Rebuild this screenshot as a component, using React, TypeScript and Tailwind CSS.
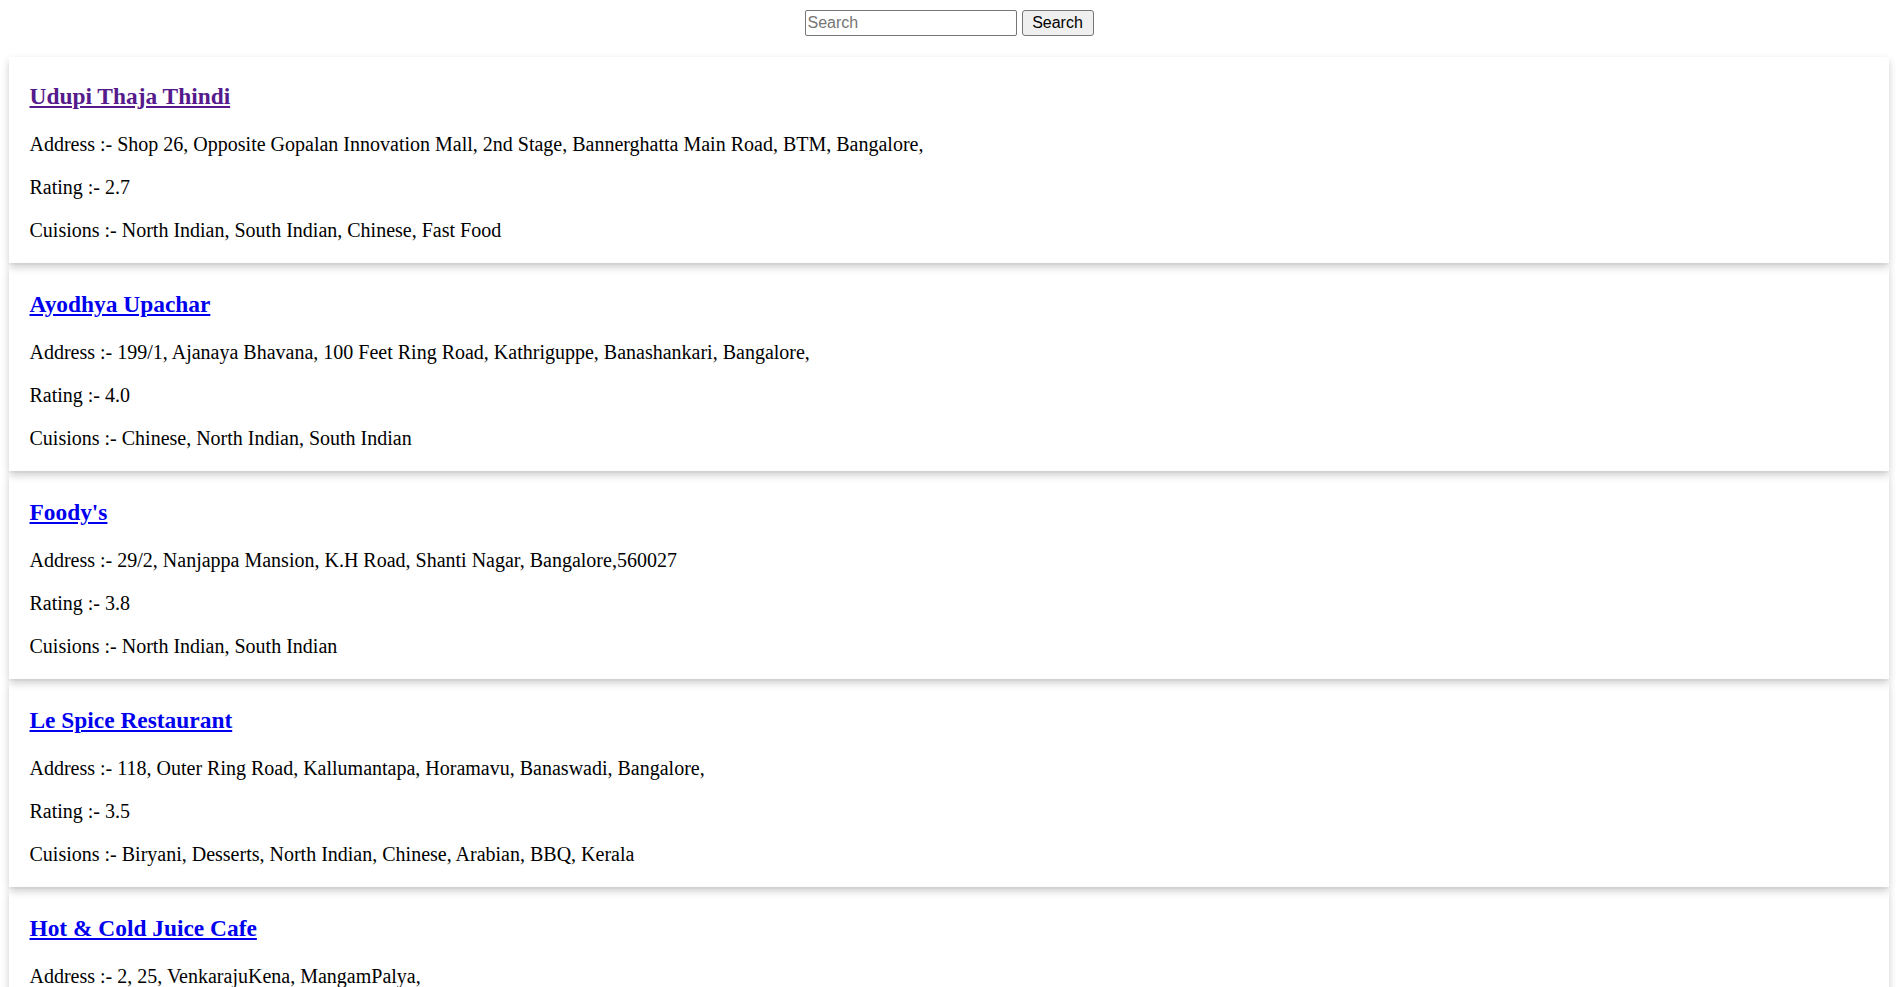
import React, { useState } from 'react'

interface Restaurant {
  name: string
  address: string
  rating: string
  cuisines: string
  visited?: boolean
}

const restaurants: Restaurant[] = [
  {
    name: 'Udupi Thaja Thindi',
    address: 'Shop 26, Opposite Gopalan Innovation Mall, 2nd Stage, Bannerghatta Main Road, BTM, Bangalore,',
    rating: '2.7',
    cuisines: 'North Indian, South Indian, Chinese, Fast Food',
    visited: true,
  },
  {
    name: 'Ayodhya Upachar',
    address: '199/1, Ajanaya Bhavana, 100 Feet Ring Road, Kathriguppe, Banashankari, Bangalore,',
    rating: '4.0',
    cuisines: 'Chinese, North Indian, South Indian',
  },
  {
    name: "Foody's",
    address: '29/2, Nanjappa Mansion, K.H Road, Shanti Nagar, Bangalore,560027',
    rating: '3.8',
    cuisines: 'North Indian, South Indian',
  },
  {
    name: 'Le Spice Restaurant',
    address: '118, Outer Ring Road, Kallumantapa, Horamavu, Banaswadi, Bangalore,',
    rating: '3.5',
    cuisines: 'Biryani, Desserts, North Indian, Chinese, Arabian, BBQ, Kerala',
  },
  {
    name: 'Hot & Cold Juice Cafe',
    address: '2, 25, VenkarajuKena, MangamPalya,',
    rating: '3.2',
    cuisines: 'Juices, Fast Food',
  },
]

const RestaurantCard: React.FC<{ item: Restaurant }> = ({ item }) => (
  <div className="mx-auto w-[99%] px-5 pt-[25.6px] pb-[21.2px] shadow-[0_4px_8px_0_rgba(0,0,0,0.2)]">
    <a
      href="#"
      className={
        item.visited
          ? 'block w-fit text-[23.4px] font-bold leading-[26.9px] text-[#551a8b] underline'
          : 'block w-fit text-[23.4px] font-bold leading-[26.9px] text-[#0000ee] underline'
      }
    >
      {item.name}
    </a>
    <div className="mt-[23.3px] flex flex-col gap-5 text-[20px] leading-[23px] text-black">
      <p>Address :- {item.address}</p>
      <p>Rating :- {item.rating}</p>
      <p>Cuisions :- {item.cuisines}</p>
    </div>
  </div>
)

export default function App() {
  const [query, setQuery] = useState('')

  return (
    <div className="min-h-screen bg-white font-['Liberation_Serif',serif]">
      <div className="flex justify-center gap-[5px] pt-[10px]">
        <input
          type="text"
          value={query}
          onChange={(e) => setQuery(e.target.value)}
          placeholder="Search"
          className="h-[26px] w-[212px] rounded-[2px] border border-[#767676] px-[2px] font-['Liberation_Sans',Arial,sans-serif] text-[16px] placeholder:text-[#757575]"
        />
        <button
          type="button"
          className="h-[26px] w-[72px] rounded-[3px] border border-[#767676] bg-[#efefef] font-['Liberation_Sans',Arial,sans-serif] text-[16px] text-black"
        >
          Search
        </button>
      </div>
      <div className="mt-[21px] flex flex-col gap-[2px]">
        {restaurants.map((r) => (
          <RestaurantCard key={r.name} item={r} />
        ))}
      </div>
    </div>
  )
}
